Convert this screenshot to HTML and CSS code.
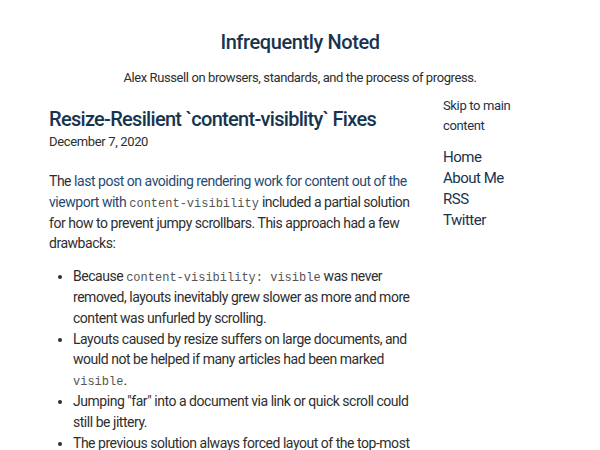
FILE: index.html
```html
<!DOCTYPE html>
<html>
<head>
<meta charset="utf-8">
<link rel="stylesheet" href="styles.css">
</head>
<body>
<header class="site-header">
  <div class="site-title">Infrequently Noted</div>
  <div class="site-tagline">Alex Russell on browsers, standards, and the process of progress.</div>
</header>
<div class="layout">
  <main class="main">
    <h1 class="post-title">Resize-Resilient `content-visiblity` Fixes</h1>
    <div class="post-date">December 7, 2020</div>
    <p class="para">The <a class="link" href="#">last post on avoiding rendering work for content out of the viewport with</a> <code class="code">content-visibility</code> included a partial solution for how to prevent jumpy scrollbars. This approach had a few drawbacks:</p>
    <ul class="list">
      <li>Because <code class="code">content-visibility: visible</code> was never removed, layouts inevitably grew slower as more and more content was unfurled by scrolling.</li>
      <li>Layouts caused by resize suffers on large documents, and would not be helped if many articles had been marked <code class="code">visible</code>.</li>
      <li>Jumping "far" into a document via link or quick scroll could still be jittery.</li>
      <li>The previous solution always forced layout of the top-most article</li>
    </ul>
  </main>
  <nav class="sidebar">
    <a class="skip" href="#">Skip to main content</a>
    <ul class="nav">
      <li><a href="#">Home</a></li>
      <li><a href="#">About Me</a></li>
      <li><a href="#">RSS</a></li>
      <li><a href="#">Twitter</a></li>
    </ul>
  </nav>
</div>
</body>
</html>
```
FILE: styles.css
```css
html, body {
  margin: 0;
  padding: 0;
  background: #fff;
}
body {
  font-family: Roboto, "Noto Sans", sans-serif;
  color: #2e2e2e;
  overflow: hidden;
  height: 450px;
}
.site-header {
  text-align: center;
  padding-top: 30px;
}
.site-title {
  font-size: 20px;
  line-height: 24px;
  color: #17344f;
  font-weight: 500;
  letter-spacing: -0.4px;
}
.site-tagline {
  font-size: 13px;
  line-height: 16px;
  margin-top: 16px;
  color: #2e2e2e;
  letter-spacing: -0.4px;
}
.layout {
  display: flex;
  padding-left: 49px;
  margin-top: 10px;
}
.main {
  width: 362px;
  flex: none;
  padding-top: 8px;
}
.sidebar {
  margin-left: 32px;
}
.post-title {
  font-size: 20px;
  line-height: 24px;
  font-weight: 500;
  color: #17344f;
  margin: 0;
  padding-top: 3px;
  letter-spacing: -0.7px;
}
.post-date {
  font-size: 13px;
  line-height: 18px;
  margin-top: 2px;
  color: #2e2e2e;
  letter-spacing: -0.35px;
}
.para {
  font-size: 14px;
  line-height: 20.8px;
  margin: 20px 0 0;
  letter-spacing: -0.47px;
}
.link {
  color: #1f4a72;
  text-decoration: none;
}
.code {
  font-family: "Liberation Mono", monospace;
  font-size: 12px;
  line-height: 1;
  letter-spacing: 0;
  color: #555;
}
.list {
  margin: 12px 0 0;
  padding-left: 24px;
  font-size: 14px;
  line-height: 20.8px;
  letter-spacing: -0.47px;
}
.skip {
  display: block;
  font-size: 13px;
  line-height: 20px;
  color: #17344f;
  text-decoration: none;
  width: 90px;
  letter-spacing: -0.35px;
}
.nav {
  list-style: none;
  margin: 11px 0 0;
  padding: 0;
}
.nav li {
  font-size: 15px;
  line-height: 21px;
  letter-spacing: -0.5px;
}
.nav a {
  color: #17344f;
  text-decoration: none;
}
```
